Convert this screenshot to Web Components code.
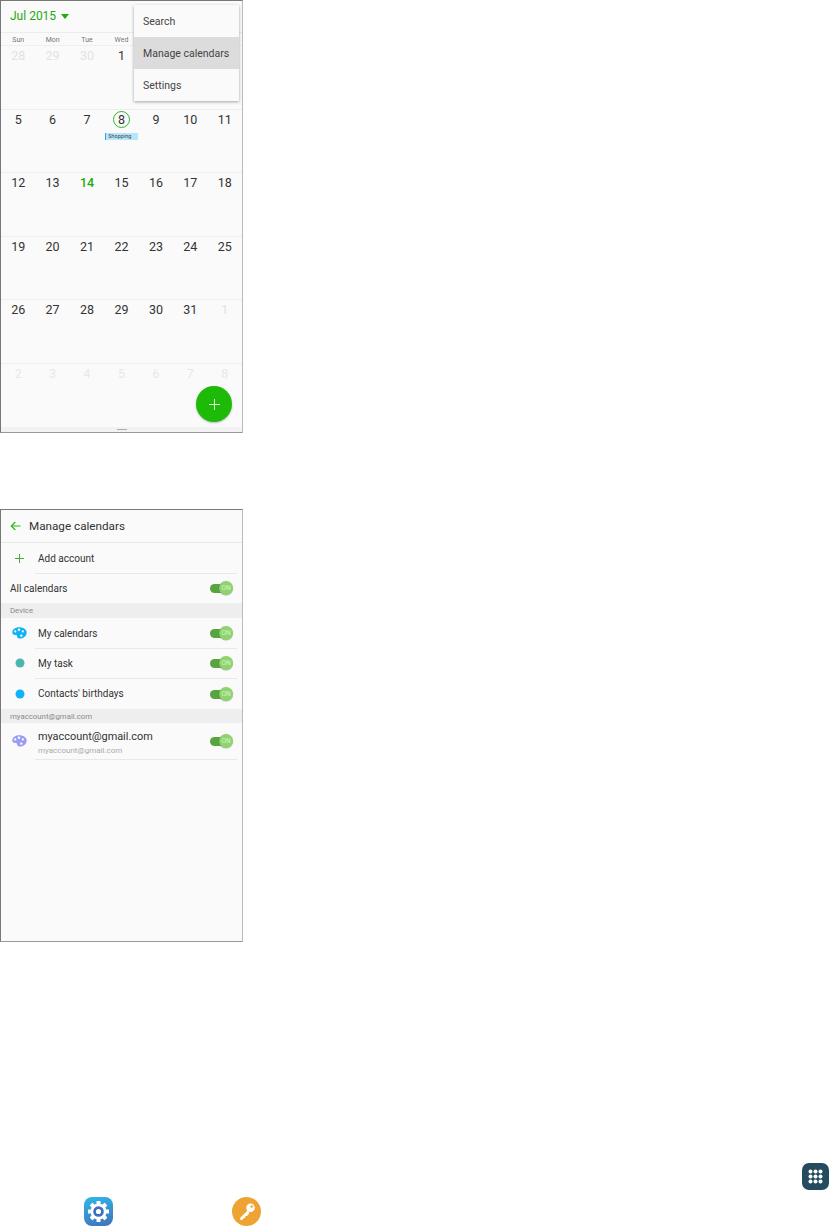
<!DOCTYPE html>
<html>
<head>
<meta charset="utf-8">
<title>Calendar</title>
<style>
  html, body { margin: 0; padding: 0; background: #fff; }
  body { width: 831px; height: 1226px; overflow: hidden; font-family: Roboto, "Liberation Sans", sans-serif; }
</style>
</head>
<body>
<cal-page></cal-page>

<script>
class phoneScreen extends HTMLElement {
  constructor() {
    super();
    this.attachShadow({ mode: "open" });
    this.shadowRoot.innerHTML = `
      <style>
        :host {
          display: block;
          position: relative;
          box-sizing: border-box;
          width: 243px;
          height: 433px;
          background: #fafafa;
          border-top: 1px solid #777;
          border-left: 1px solid #777;
          border-right: 1px solid #bbb;
          border-bottom: 1px solid #999;
          color: #333;
          overflow: hidden;
        }
      </style>
      <slot></slot>
    `;
  }
}

class popMenu extends HTMLElement {
  constructor() {
    super();
    this.attachShadow({ mode: "open" });
    this.shadowRoot.innerHTML = `
      <style>
        :host {
          position: absolute;
          top: 4px;
          left: 133px;
          width: 104.500px;
          display: flex;
          flex-direction: column;
          background: #fafafa;
          box-shadow: 0 1px 3px rgba(0, 0, 0, 0.35);
          font-size: 10.5px;
          color: #444;
        }
        .item { height: 32px; display: flex; align-items: center; padding-left: 9px; }
        .on { background: #dcdcdc; }
      </style>
      <div class="item">Search</div>
      <div class="item on">Manage calendars</div>
      <div class="item">Settings</div>
    `;
  }
}

class calMonth extends HTMLElement {
  constructor() {
    super();
    this.attachShadow({ mode: "open" });
    // the last three of the first rows sit under the menu, so they stay empty
    const names = ["Sun", "Mon", "Tue", "Wed", "", "", ""];
    const days = [
      28, 29, 30, 1, "", "", "",
      5, 6, 7, 8, 9, 10, 11,
      12, 13, 14, 15, 16, 17, 18,
      19, 20, 21, 22, 23, 24, 25,
      26, 27, 28, 29, 30, 31, 1,
      2, 3, 4, 5, 6, 7, 8
    ];
    let cells = "";
    days.forEach((d, i) => {
      let cls = "day";
      if (i < 3 || i > 33) cls += " off";
      if (i > 34) cls += " last";
      if (i === 16) cls += " today";
      if (i === 10) cls += " picked";
      let extra = i === 10 ? `<div class="event">Shopping</div>` : "";
      cells += `<div class="${cls}"><span class="num">${d}</span>${extra}</div>`;
    });
    this.shadowRoot.innerHTML = `
      <style>
        :host { display: flex; flex-direction: column; height: 100%; position: relative; }
        .head {
          height: 32px;
          flex: none;
          box-sizing: border-box;
          border-bottom: 1px solid #ececec;
          display: flex;
          align-items: center;
          gap: 5px;
          padding: 0 0 1px 9px;
          color: #23a90e;
          font-size: 12px;
        }
        .arrow { width: 0; height: 0; border-left: 4px solid transparent; border-right: 4px solid transparent; border-top: 5px solid #23a90e; }
        .week { height: 12px; flex: none; display: grid; grid-template-columns: repeat(7, 1fr); border-bottom: 1px solid #efefef; }
        .week div { text-align: center; font-size: 7px; line-height: 14px; color: #777; }
        .grid { flex: none; display: grid; grid-template-columns: repeat(7, 1fr); grid-auto-rows: 63.5px; }
        .day { position: relative; box-sizing: border-box; border-bottom: 1px solid #eee; text-align: center; font-size: 12.5px; padding-top: 2px; line-height: 15px; color: #333; }
        .day:nth-last-child(-n+7) { border-bottom: 0; }
        .off { color: #e2e2e2; }
        .last { color: #e8e8e8; }
        .today { color: #23a90e; font-weight: 500; }
        .num { position: relative; display: inline-block; }
        .picked .num::before {
          content: "";
          position: absolute;
          left: 50%;
          top: 50%;
          width: 15px;
          height: 15px;
          margin: -8.5px 0 0 -8.5px;
          border: 1px solid #35b52a;
          border-radius: 50%;
        }
        .event {
          position: absolute;
          left: 1px;
          top: 23px;
          width: 33px;
          height: 7px;
          box-sizing: border-box;
          background: #b5e6fb;
          border-left: 1px solid #1ba6ee;
          font-size: 5.5px;
          line-height: 7px;
          text-align: left;
          padding-left: 2px;
          color: #444;
          white-space: nowrap;
        }
        .handle { position: absolute; left: 0; right: 0; bottom: 0; height: 5px; background: #f2f2f2; }
        .handle::after { content: ""; position: absolute; left: 116px; top: 2px; width: 10px; height: 1px; background: #aaa; }
        .fab {
          position: absolute;
          left: 195px;
          top: 385px;
          width: 36px;
          height: 36px;
          border-radius: 50%;
          background: #1dba08;
          box-shadow: 0 1px 2px rgba(0, 0, 0, 0.25);
          display: flex;
          align-items: center;
          justify-content: center;
        }
      </style>
      <div class="head">Jul 2015 <span class="arrow"></span></div>
      <div class="week">${names.map(n => `<div>${n}</div>`).join("")}</div>
      <div class="grid">${cells}</div>
      <div class="handle"></div>
      <div class="fab">
        <svg width="11" height="11" viewBox="0 0 11 11"><path d="M5.5 0v11M0 5.5h11" stroke="#dff5d8" stroke-width="1"/></svg>
      </div>
      <pop-menu></pop-menu>
    `;
  }
}

class onSwitch extends HTMLElement {
  constructor() {
    super();
    this.attachShadow({ mode: "open" });
    this.shadowRoot.innerHTML = `
      <style>
        :host { display: block; position: relative; width: 23px; height: 14px; flex: none; }
        .track { position: absolute; left: 0; top: 3px; width: 16px; height: 9px; border-radius: 5px; background: #58a540; }
        .knob {
          position: absolute;
          right: 0;
          top: 0;
          width: 14px;
          height: 14px;
          border-radius: 50%;
          background: #8dd46e;
          box-shadow: 0 0.5px 1px rgba(0, 0, 0, 0.3);
          color: #d8f3cc;
          font-size: 6.5px;
          line-height: 14px;
          text-align: center;
        }
      </style>
      <div class="track"></div>
      <div class="knob">ON</div>
    `;
  }
}

class calRow extends HTMLElement {
  constructor() {
    super();
    this.attachShadow({ mode: "open" });
    this.shadowRoot.innerHTML = `
      <style>
        :host { display: block; font-size: 10px; color: #333; }
        .row {
          display: flex;
          align-items: center;
          box-sizing: border-box;
          height: var(--h, 30px);
          padding-right: 9px;
        }
        .lead { width: 37px; flex: none; display: flex; justify-content: center; box-sizing: border-box; }
        .text { flex: 1; min-width: 0; }
        .rule { height: 1px; background: #e8e8e8; margin: 0 5px -1px 34px; position: relative; }
        :host([flat]) .rule { display: none; }
        :host([plain]) .lead { width: 9px; }
      </style>
      <div class="row">
        <div class="lead"><slot name="lead"></slot></div>
        <div class="text"><slot></slot></div>
        <slot name="end"></slot>
      </div>
      <div class="rule"></div>
    `;
  }
}

class sectionLabel extends HTMLElement {
  constructor() {
    super();
    this.attachShadow({ mode: "open" });
    this.shadowRoot.innerHTML = `
      <style>
        :host {
          display: flex;
          align-items: center;
          height: var(--h, 15px);
          background: #eeeeee;
          padding-left: 9px;
          font-size: 7.8px;
          color: #8a8a8a;
        }
      </style>
      <slot></slot>
    `;
  }
}

class manageList extends HTMLElement {
  constructor() {
    super();
    this.attachShadow({ mode: "open" });
    const palette = c => `
      <svg slot="lead" width="15" height="12" viewBox="0 0 15 12">
        <path d="M7 0.3C3 0.3 0.3 2.6 0.3 5.6c0 2 1.8 2.5 3.2 2.4 1.4-0.1 1.7 0.7 1.7 1.6 0 1.4 1.2 2 2.7 2 3.8 0 6.8-2.6 6.8-6C14.700 2.500 11.500 0.300 7 0.300z" fill="${c}"/>
        <circle cx="3.300" cy="4.400" r="1.100" fill="#fff"/>
        <circle cx="7" cy="2.700" r="1.200" fill="#fff"/>
        <circle cx="10.800" cy="4.400" r="1.100" fill="#fff"/>
        <circle cx="9.300" cy="8.600" r="1.200" fill="#fff"/>
      </svg>`;
    const dot = c => `<svg slot="lead" width="10" height="10" viewBox="0 0 10 10"><circle cx="5" cy="5" r="4.500" fill="${c}"/></svg>`;
    this.shadowRoot.innerHTML = `
      <style>
        :host { display: block; font-size: 10px; }
        .title {
          height: 33px;
          box-sizing: border-box;
          border-bottom: 1px solid #e8e8e8;
          display: flex;
          align-items: center;
          gap: 8px;
          padding-left: 9px;
          font-size: 11.7px;
          color: #333;
        }
        .sub { font-size: 8px; color: #aaa; margin-top: 2px; line-height: 9px; }
        .big { font-size: 10.900px; line-height: 14px; margin-top: 2px; color: #333; }
      </style>
      <div class="title">
        <svg width="11" height="10" viewBox="0 0 11 10"><path d="M10.500 5H1.500M5.300 1L1.300 5l4 4" fill="none" stroke="#2cb81a" stroke-width="1.200"/></svg>
        Manage calendars
      </div>
      <cal-row>
        <svg slot="lead" width="9" height="9" viewBox="0 0 9 9"><path d="M4.500 0v9M0 4.500h9" stroke="#4aa83c" stroke-width="1"/></svg>
        Add account
      </cal-row>
      <cal-row flat plain>All calendars<on-switch slot="end"></on-switch></cal-row>
      <section-label>Device</section-label>
      <cal-row>${palette("#0fb1f7")}My calendars<on-switch slot="end"></on-switch></cal-row>
      <cal-row>${dot("#4db6ac")}My task<on-switch slot="end"></on-switch></cal-row>
      <cal-row flat style="--h:31px">${dot("#12b2fb")}Contacts' birthdays<on-switch slot="end"></on-switch></cal-row>
      <section-label style="--h:14px">myaccount@gmail.com</section-label>
      <cal-row style="--h:36px">
        ${palette("#9a9cf3")}
        <div class="big">myaccount@gmail.com</div>
        <div class="sub">myaccount@gmail.com</div>
        <on-switch slot="end"></on-switch>
      </cal-row>
    `;
  }
}

class appIcons extends HTMLElement {
  constructor() {
    super();
    this.attachShadow({ mode: "open" });
    // gear teeth built in a loop, saves writing the path by hand
    let teeth = "";
    for (let a = 0; a < 360; a += 45) {
      teeth += `<rect x="12.500" y="4" width="4" height="5" rx="0.600" fill="#fff" transform="rotate(${a} 14.500 14.500)"/>`;
    }
    let dots = "";
    for (let r = 0; r < 3; r++) {
      for (let c = 0; c < 3; c++) {
        dots += `<circle cx="${8.500 + c * 5}" cy="${8.500 + r * 5}" r="2" fill="#fff"/>`;
      }
    }
    this.shadowRoot.innerHTML = `
      <style>
        :host { display: block; }
        .top { display: flex; justify-content: flex-end; padding-right: 2px; }
        .low { display: flex; gap: 119px; padding: 7px 0 0 84px; }
        svg { display: block; }
      </style>
      <div class="top">
        <svg width="27" height="27" viewBox="0 0 27 27">
          <rect width="27" height="27" rx="7" fill="#254c5e"/>
          ${dots}
        </svg>
      </div>
      <div class="low">
        <svg width="29" height="29" viewBox="0 0 29 29">
          <defs><linearGradient id="g" x1="0.300" y1="0" x2="0.600" y2="1"><stop offset="0" stop-color="#2fb4e6"/><stop offset="1" stop-color="#3f78bd"/></linearGradient></defs>
          <rect width="29" height="29" rx="8" fill="url(#g)"/>
          ${teeth}
          <circle cx="14.500" cy="14.500" r="8" fill="#fff"/>
          <circle cx="14.500" cy="14.500" r="5.300" fill="#3b6fbd"/>
          <circle cx="14.500" cy="14.500" r="2.600" fill="#fff"/>
        </svg>
        <svg width="29" height="29" viewBox="0 0 29 29">
          <circle cx="14.500" cy="14.500" r="14.500" fill="#eea432"/>
          <path d="M15.800 13.200L8 21l0.200 1.800 2.400 0.100 0.800-1.700 1.600-0.300 0.400-1.600 1.600-0.400 2.400-3" fill="#fff"/>
          <circle cx="18.500" cy="10.700" r="4.300" fill="#fff"/>
          <circle cx="19.700" cy="9.500" r="1.200" fill="#eea432"/>
        </svg>
      </div>
    `;
  }
}

class calPage extends HTMLElement {
  constructor() {
    super();
    this.attachShadow({ mode: "open" });
    this.shadowRoot.innerHTML = `
      <style>
        :host { display: flex; flex-direction: column; width: 831px; height: 1226px; }
        .second { margin-top: 76px; }
        app-icons { margin-top: 221px; }
      </style>
      <phone-screen><cal-month></cal-month></phone-screen>
      <phone-screen class="second"><manage-list></manage-list></phone-screen>
      <app-icons></app-icons>
    `;
  }
}

customElements.define("phone-screen", phoneScreen);
customElements.define("pop-menu", popMenu);
customElements.define("cal-month", calMonth);
customElements.define("on-switch", onSwitch);
customElements.define("cal-row", calRow);
customElements.define("section-label", sectionLabel);
customElements.define("manage-list", manageList);
customElements.define("app-icons", appIcons);
customElements.define("cal-page", calPage);
</script>
</body>
</html>
